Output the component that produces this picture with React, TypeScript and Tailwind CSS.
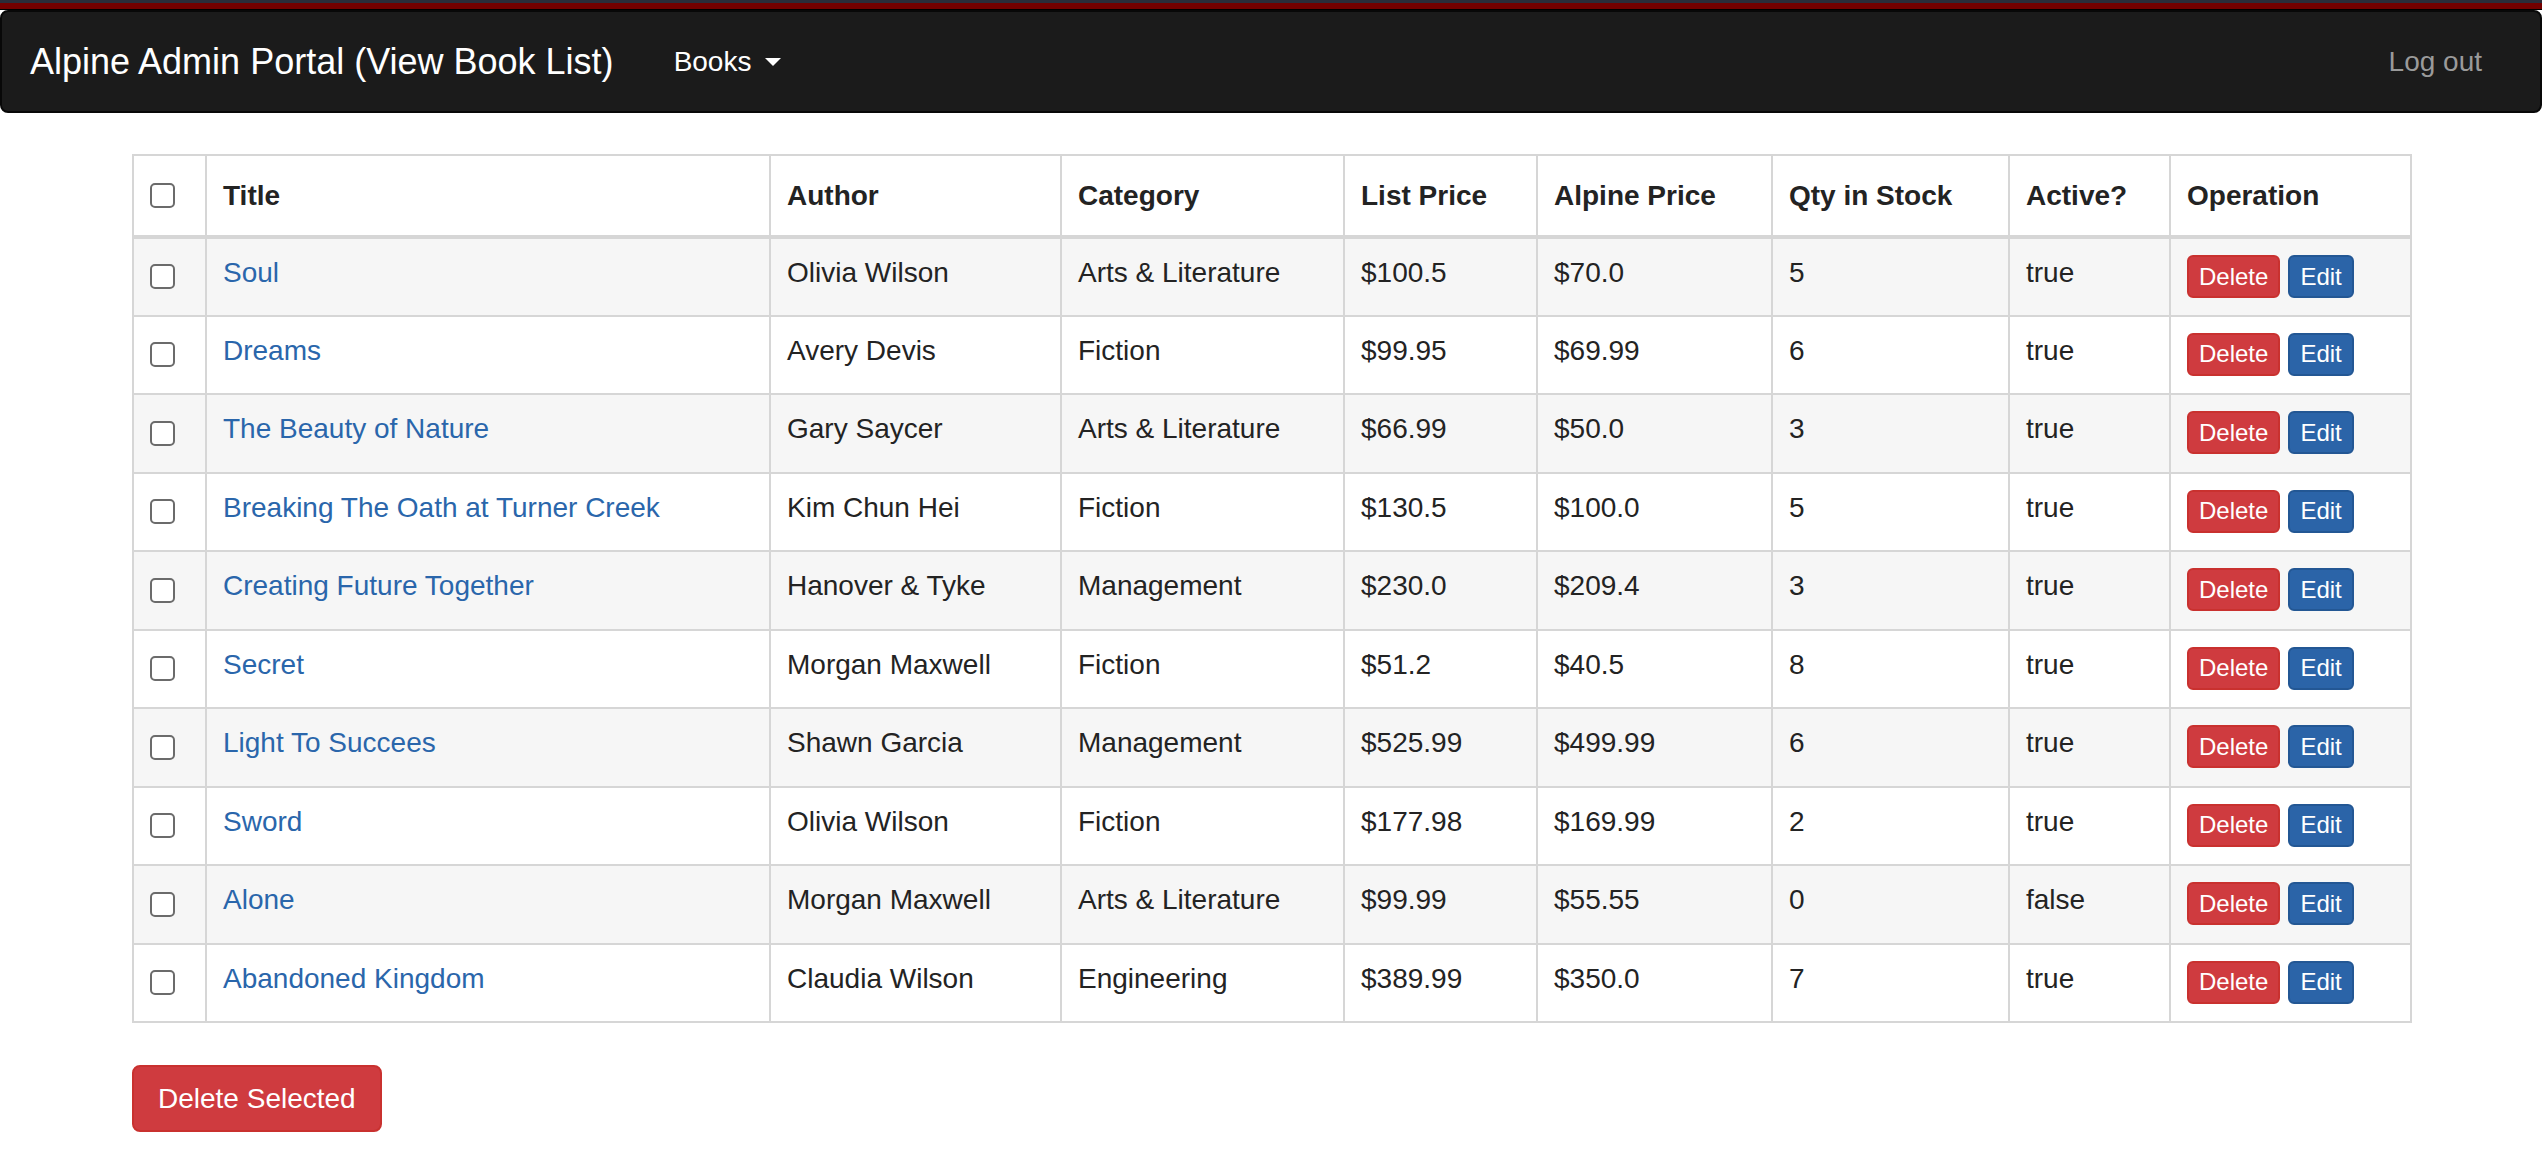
import React from 'react';

type Book = {
  title: string;
  author: string;
  category: string;
  listPrice: string;
  alpinePrice: string;
  qty: number;
  active: boolean;
};

const books: Book[] = [
  { title: 'Soul', author: 'Olivia Wilson', category: 'Arts & Literature', listPrice: '$100.5', alpinePrice: '$70.0', qty: 5, active: true },
  { title: 'Dreams', author: 'Avery Devis', category: 'Fiction', listPrice: '$99.95', alpinePrice: '$69.99', qty: 6, active: true },
  { title: 'The Beauty of Nature', author: 'Gary Saycer', category: 'Arts & Literature', listPrice: '$66.99', alpinePrice: '$50.0', qty: 3, active: true },
  { title: 'Breaking The Oath at Turner Creek', author: 'Kim Chun Hei', category: 'Fiction', listPrice: '$130.5', alpinePrice: '$100.0', qty: 5, active: true },
  { title: 'Creating Future Together', author: 'Hanover & Tyke', category: 'Management', listPrice: '$230.0', alpinePrice: '$209.4', qty: 3, active: true },
  { title: 'Secret', author: 'Morgan Maxwell', category: 'Fiction', listPrice: '$51.2', alpinePrice: '$40.5', qty: 8, active: true },
  { title: 'Light To Succees', author: 'Shawn Garcia', category: 'Management', listPrice: '$525.99', alpinePrice: '$499.99', qty: 6, active: true },
  { title: 'Sword', author: 'Olivia Wilson', category: 'Fiction', listPrice: '$177.98', alpinePrice: '$169.99', qty: 2, active: true },
  { title: 'Alone', author: 'Morgan Maxwell', category: 'Arts & Literature', listPrice: '$99.99', alpinePrice: '$55.55', qty: 0, active: false },
  { title: 'Abandoned Kingdom', author: 'Claudia Wilson', category: 'Engineering', listPrice: '$389.99', alpinePrice: '$350.0', qty: 7, active: true },
];

const Checkbox = () => (
  <span className="block w-[25px] h-[25px] border-2 border-[#6b6b6b] rounded-[5px] bg-white" />
);

const Navbar = () => (
  <div>
    <div className="h-[3px] bg-[#2b2d3a]" />
    <div className="h-[6px] bg-[#740000]" />
    <div className="h-[1px] bg-black" />
    <nav className="h-[103px] bg-[#1b1b1b] border-2 border-[#080808] rounded-[8px] flex items-center">
      <a className="pl-[28px] pr-[30px] text-[36px] text-white">Alpine Admin Portal (View Book List)</a>
      <a className="px-[30px] text-[28px] text-white flex items-center">
        Books
        <span className="ml-[14px] w-0 h-0 border-l-[8px] border-r-[8px] border-t-[8px] border-l-transparent border-r-transparent border-t-white" />
      </a>
      <a className="ml-auto pr-[58px] text-[28px] text-[#9a9a9a]">Log out</a>
    </nav>
  </div>
);

const th = 'px-4 text-left font-bold border-2 border-[#d6d6d6]';
const td = 'px-4 pt-[14px] border-2 border-[#d6d6d6] align-top';

const App = () => {
  return (
    <div className="min-h-screen bg-white text-[#232323]" style={{ fontFamily: '"Liberation Sans", Arial, sans-serif' }}>
      <Navbar />
      <div className="w-[2278px] mx-auto mt-[41px]">
        <table className="w-[2278px] table-fixed border-collapse text-[28px] leading-[40px]">
          <colgroup>
            <col className="w-[73px]" />
            <col className="w-[564px]" />
            <col className="w-[291px]" />
            <col className="w-[283px]" />
            <col className="w-[193px]" />
            <col className="w-[235px]" />
            <col className="w-[237px]" />
            <col className="w-[161px]" />
            <col className="w-[241px]" />
          </colgroup>
          <thead>
            <tr className="h-[82px] border-b-4 border-b-[#d6d6d6]">
              <th className={th}><Checkbox /></th>
              <th className={th}>Title</th>
              <th className={th}>Author</th>
              <th className={th}>Category</th>
              <th className={th}>List Price</th>
              <th className={th}>Alpine Price</th>
              <th className={th}>Qty in Stock</th>
              <th className={th}>Active?</th>
              <th className={th}>Operation</th>
            </tr>
          </thead>
          <tbody>
            {books.map((b, i) => (
              <tr key={b.title} className={`h-[78.5px] ${i % 2 === 0 ? 'bg-[#f6f6f6]' : 'bg-white'}`}>
                <td className="px-4 border-2 border-[#d6d6d6] align-middle"><Checkbox /></td>
                <td className={td}><a className="text-[#2a66ab]">{b.title}</a></td>
                <td className={td}>{b.author}</td>
                <td className={td}>{b.category}</td>
                <td className={td}>{b.listPrice}</td>
                <td className={td}>{b.alpinePrice}</td>
                <td className={td}>{b.qty}</td>
                <td className={td}>{b.active ? 'true' : 'false'}</td>
                <td className="px-4 pt-[16px] border-2 border-[#d6d6d6] align-top">
                  <div className="flex items-center gap-[8px]">
                    <button className="h-[43px] px-[10px] text-[24px] leading-[36px] text-white bg-[#cf3b3f] border-2 border-[#c9312f] rounded-[6px]">
                      Delete
                    </button>
                    <button className="h-[43px] px-[10px] text-[24px] leading-[36px] text-white bg-[#2b64a8] border-2 border-[#235794] rounded-[6px]">
                      Edit
                    </button>
                  </div>
                </td>
              </tr>
            ))}
          </tbody>
        </table>
        <button className="mt-[42px] h-[67px] px-[24px] text-[28px] text-white bg-[#cf3b3f] border-2 border-[#c9312f] rounded-[8px]">
          Delete Selected
        </button>
      </div>
    </div>
  );
};

export default App;
